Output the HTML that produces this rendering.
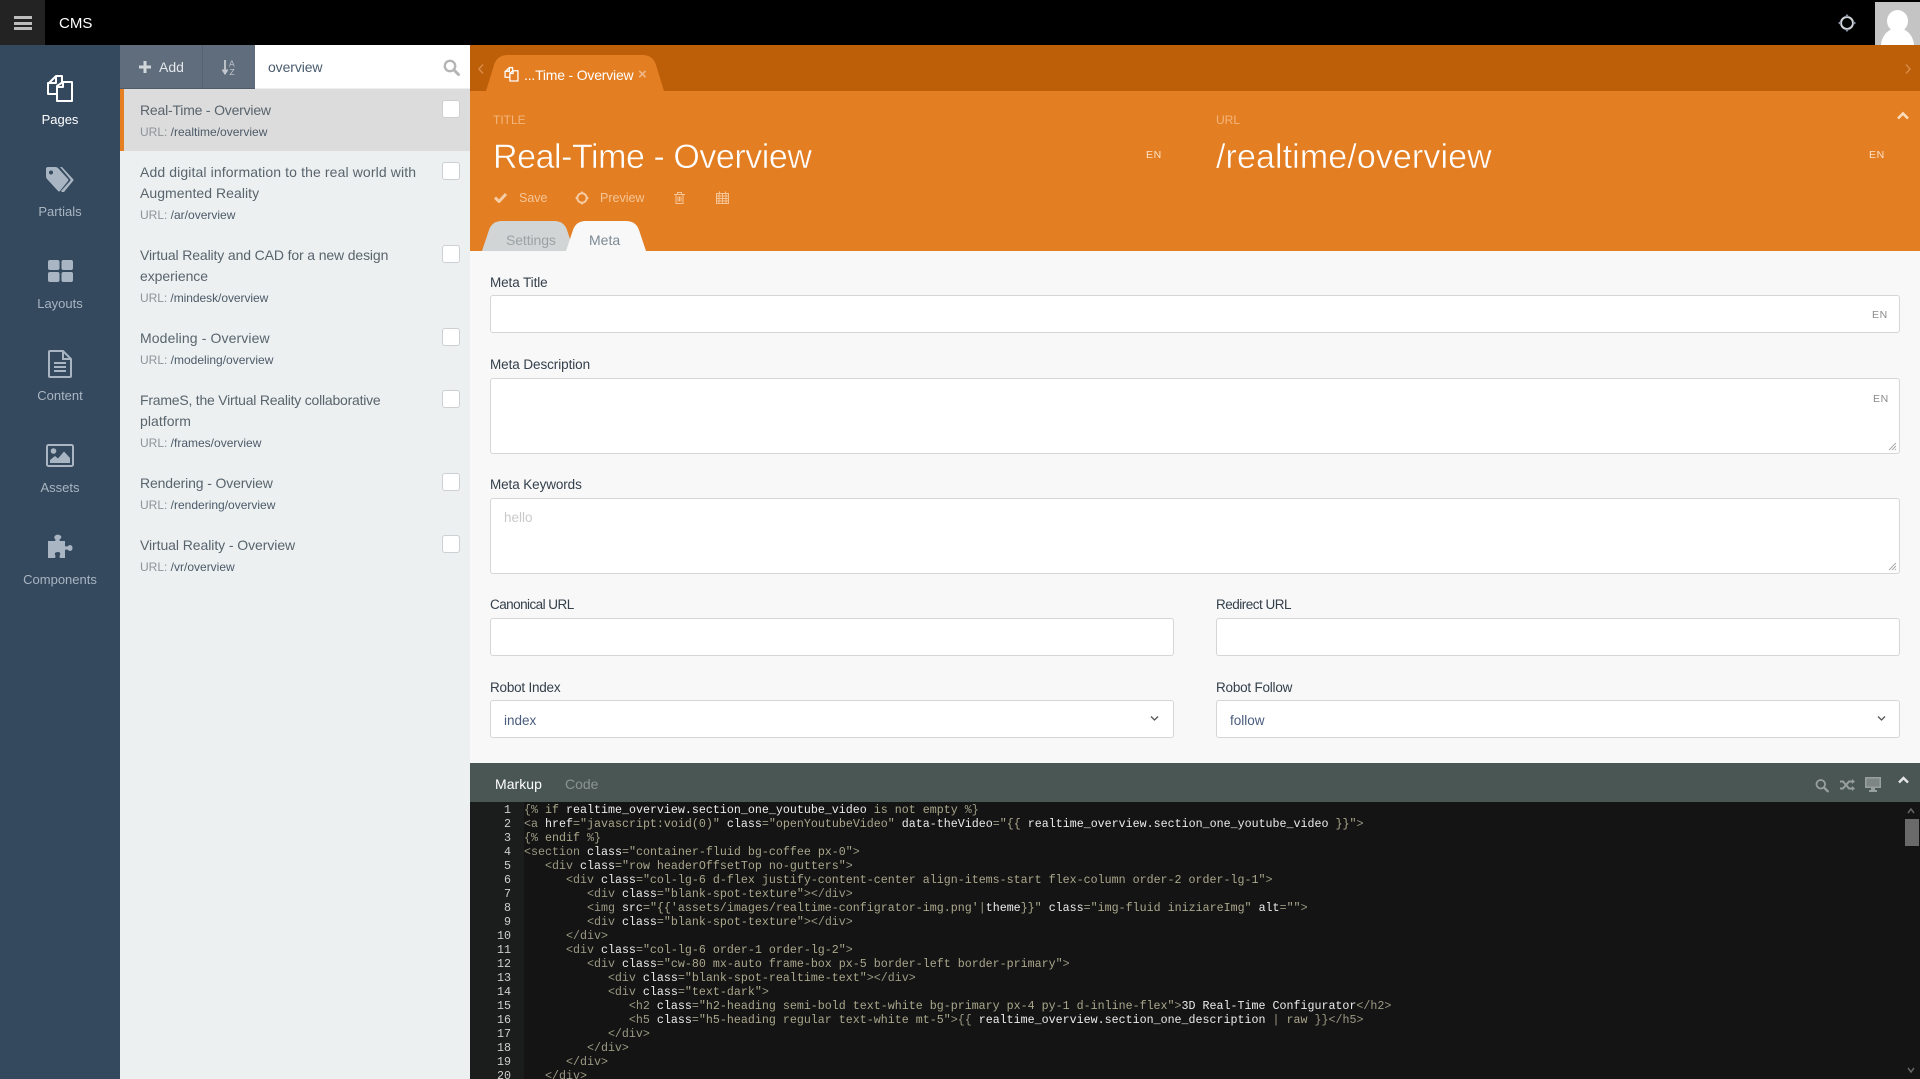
<!DOCTYPE html>
<html lang="en"><head><meta charset="utf-8"><title>CMS</title>
<style>
*{box-sizing:border-box}
html,body{margin:0;padding:0;width:1920px;height:1079px;overflow:hidden;background:#f8f8f8;font-family:"Liberation Sans",sans-serif}
.a{position:absolute}
.t{position:absolute;white-space:nowrap;line-height:20px;font-size:13.5px}
.nav{position:absolute;left:0;width:120px;text-align:center;line-height:20px;font-size:13px;color:#a9b5c2}
.tt{color:#59646d;font-size:14px;left:140px}
.u{color:#4c5a68;font-size:12px;left:140px}
.u i{font-style:normal;color:#8c9499}
.cb{position:absolute;left:442px;width:18px;height:18px;background:#fff;border:1px solid #ccd0d3;border-radius:3px}
.lb{color:#34404c;font-size:13.5px}
.in{position:absolute;background:#fff;border:1px solid #d4d6d8;border-radius:3px}
.en{position:absolute;font-size:10.5px;letter-spacing:.6px;line-height:14px;white-space:nowrap}
.big{color:#fff;font-size:34px;line-height:40px;-webkit-text-stroke:.5px #e37e23}
pre{position:absolute;margin:0;font-family:"Liberation Mono",monospace;font-size:11.66px;line-height:14px;white-space:pre}
.g{color:#9c9a84}.s{color:#aaa78c}.w{color:#ececec}
</style></head><body>

<!-- top bar -->
<div class="a" style="left:0;top:0;width:1920px;height:45px;background:#000"></div>
<div class="a" style="left:0;top:0;width:45px;height:45px;background:#232323"></div>
<div class="a" style="left:14px;top:16px;width:18px;height:3px;background:#bdbdbd"></div>
<div class="a" style="left:14px;top:22px;width:18px;height:3px;background:#bdbdbd"></div>
<div class="a" style="left:14px;top:27px;width:18px;height:3px;background:#bdbdbd"></div>
<div class="t" style="left:59px;top:14px;color:#fff;font-size:15px">CMS</div>
<svg class="a" style="left:1838px;top:14px" width="18" height="18" viewBox="0 0 18 18"><circle cx="9" cy="9" r="6" fill="none" stroke="#cfd3d8" stroke-width="2"/><path d="M9 0l2.400 3H6.600zM9 18l-2.400-3h4.800zM0 9l3-2.400v4.800zM18 9l-3 2.400V6.600z" fill="#8f99a8"/></svg>
<div class="a" style="left:1875px;top:2px;width:45px;height:43px;background:#c4c4c4;overflow:hidden">
<div class="a" style="left:12px;top:8px;width:21px;height:22px;border-radius:50%;background:#fff"></div>
<div class="a" style="left:6px;top:26px;width:33px;height:40px;border-radius:50%/45%;background:#fff"></div></div>

<!-- sidebar -->
<div class="a" style="left:0;top:45px;width:120px;height:1034px;background:#34495e"></div>
<svg class="a" style="left:46px;top:74px" width="28" height="28" viewBox="0 0 28 28" fill="none" stroke="#fff" stroke-width="2" stroke-linejoin="round"><path d="M10 2H16V8M2 10L10 2V9H2V20H11"/><path d="M11 12L17 8H26V27H11ZM17 8V13H11" /></svg>
<div class="nav" style="top:110px;color:#fff">Pages</div>
<svg class="a" style="left:46px;top:167px" width="29" height="26" viewBox="0 0 29 26" fill="#a9b5c2"><path fill-rule="evenodd" d="M0 2Q0 0 2 0H9Q11 0 12 1L22 12Q23 13 22 14L14 24Q13 25 12 24L1 12Q0 11 0 9ZM5 3.500A2 2 0 1 0 5 7.500A2 2 0 1 0 5 3.500Z"/><path d="M14 0H16L27 12Q28 13 27 14L18 25H16L15 24L24 14Q25 13 24 12Z"/></svg>
<div class="nav" style="top:202px">Partials</div>
<svg class="a" style="left:48px;top:260px" width="25" height="22" viewBox="0 0 25 22" fill="#a9b5c2"><rect width="11.500" height="10" rx="2"/><rect x="13.500" width="11.500" height="10" rx="2"/><rect y="12" width="11.500" height="10" rx="2"/><rect x="13.500" y="12" width="11.500" height="10" rx="2"/></svg>
<div class="nav" style="top:294px">Layouts</div>
<svg class="a" style="left:48px;top:350px" width="24" height="28" viewBox="0 0 24 28" fill="none" stroke="#a9b5c2" stroke-width="2"><path d="M15 1H2Q1 1 1 2V26Q1 27 2 27H22Q23 27 23 26V9ZM15 1V9H23"/><path d="M6 13H18M6 17H18M6 21H18"/></svg>
<div class="nav" style="top:386px">Content</div>
<svg class="a" style="left:46px;top:444px" width="28" height="24" viewBox="0 0 28 24"><rect x="1" y="1" width="26" height="21" rx="1.500" fill="none" stroke="#a9b5c2" stroke-width="2"/><circle cx="7.500" cy="7" r="2.800" fill="#a9b5c2"/><path d="M4 19V16L9 12L12 14.500L18 7.500L24 14V19Z" fill="#a9b5c2"/></svg>
<div class="nav" style="top:478px">Assets</div>
<svg class="a" style="left:47px;top:534px" width="26" height="25" viewBox="0 0 26 25" fill="#a9b5c2"><path d="M1 7H8Q9 6 8 5Q6 3 9 1Q12 0 14 2Q15 4 13 5Q12 6 13 7H18V12Q20 13 21 12Q23 10 25 12Q26 14 25 16Q23 18 21 16Q19 15 18 16V24H13Q12 22 13 21Q14 18 11 18Q7 18 8 21Q9 22 8 24H1Z"/></svg>
<div class="nav" style="top:570px">Components</div>

<!-- list -->
<div class="a" style="left:120px;top:45px;width:350px;height:1034px;background:#ecf0f1"></div>
<div class="a" style="left:120px;top:45px;width:135px;height:44px;background:#606d7c;border-bottom:1px solid #4f5b68"></div>
<div class="a" style="left:202px;top:45px;width:1px;height:43px;background:#566270"></div>
<svg class="a" style="left:139px;top:61px" width="12" height="12" viewBox="0 0 12 12"><path d="M4.500 0h3v4.500H12v3H7.500V12h-3V7.500H0v-3h4.500z" fill="#d3d7dc"/></svg>
<div class="t" style="left:159px;top:57px;color:#e4e7ea;font-size:14px">Add</div>
<svg class="a" style="left:222px;top:59px" width="16" height="16" viewBox="0 0 16 16"><path d="M3 1v12M0.500 10.500L3 14.500L5.500 10.500" stroke="#c3c9cf" stroke-width="1.800" fill="none"/><text x="7" y="7.500" font-size="8.500" fill="#c3c9cf" font-family="Liberation Sans">A</text><text x="7.500" y="16" font-size="8.500" fill="#c3c9cf" font-family="Liberation Sans">Z</text></svg>
<div class="a" style="left:255px;top:45px;width:215px;height:43px;background:#fff"></div>
<div class="t" style="left:268px;top:57px;color:#4a5c6e;font-size:14px;letter-spacing:-.1px">overview</div>
<svg class="a" style="left:443px;top:59px" width="17" height="17" viewBox="0 0 17 17" fill="none" stroke="#b5b5b5"><circle cx="7" cy="7" r="5.200" stroke-width="2.400"/><path d="M11 11L15.500 15.500" stroke-width="3" stroke-linecap="round"/></svg>

<div class="a" style="left:120px;top:89px;width:350px;height:62px;background:#dcdcdc"></div>
<div class="a" style="left:120px;top:89px;width:4px;height:62px;background:#e67e22"></div>

<div class="t tt" style="top:100px;letter-spacing:-.2px">Real-Time - Overview</div>
<div class="t u" style="top:122px"><i>URL:</i> /realtime/overview</div>
<div class="cb" style="top:100px"></div>

<div class="t tt" style="top:162px;letter-spacing:.115px">Add digital information to the real world with</div>
<div class="t tt" style="top:183px;letter-spacing:.05px">Augmented Reality</div>
<div class="t u" style="top:205px"><i>URL:</i> /ar/overview</div>
<div class="cb" style="top:162px"></div>

<div class="t tt" style="top:245px;letter-spacing:-.13px">Virtual Reality and CAD for a new design</div>
<div class="t tt" style="top:266px;letter-spacing:-.05px">experience</div>
<div class="t u" style="top:288px;letter-spacing:-.05px"><i>URL:</i> /mindesk/overview</div>
<div class="cb" style="top:245px"></div>

<div class="t tt" style="top:328px;letter-spacing:.11px">Modeling - Overview</div>
<div class="t u" style="top:350px"><i>URL:</i> /modeling/overview</div>
<div class="cb" style="top:328px"></div>

<div class="t tt" style="top:390px;letter-spacing:-.22px">FrameS, the Virtual Reality collaborative</div>
<div class="t tt" style="top:411px;letter-spacing:.05px">platform</div>
<div class="t u" style="top:433px"><i>URL:</i> /frames/overview</div>
<div class="cb" style="top:390px"></div>

<div class="t tt" style="top:473px;letter-spacing:-.13px">Rendering - Overview</div>
<div class="t u" style="top:495px"><i>URL:</i> /rendering/overview</div>
<div class="cb" style="top:473px"></div>

<div class="t tt" style="top:535px;letter-spacing:-.07px">Virtual Reality - Overview</div>
<div class="t u" style="top:557px"><i>URL:</i> /vr/overview</div>
<div class="cb" style="top:535px"></div>

<!-- tab bar + header -->
<div class="a" style="left:470px;top:45px;width:1450px;height:46px;background:#bd5e08"></div>
<div class="a" style="left:470px;top:91px;width:1450px;height:160px;background:#e37e23"></div>
<svg class="a" style="left:476px;top:63px" width="10" height="12" viewBox="0 0 10 12"><path d="M7 1.500L3 6L7 10.500" fill="none" stroke="#d98a45" stroke-width="1.500"/></svg>
<svg class="a" style="left:1903px;top:63px" width="10" height="12" viewBox="0 0 10 12"><path d="M3 1.500L7 6L3 10.500" fill="none" stroke="#d98a45" stroke-width="1.500"/></svg>
<svg class="a" style="left:486px;top:55px" width="178" height="36" viewBox="0 0 178 36"><path d="M0 36L8 10Q11 0 22 0H156Q167 0 170 10L178 36Z" fill="#e37e23"/></svg>
<svg class="a" style="left:504px;top:66px" width="15" height="16" viewBox="0 0 28 28" fill="none" stroke="#fff" stroke-width="2.400" stroke-linejoin="round"><path d="M10 2H16V8M2 10L10 2V9H2V20H11"/><path d="M11 12L17 8H26V27H11ZM17 8V13H11"/></svg>
<div class="t" style="left:524px;top:65px;color:#fff;font-size:14px;letter-spacing:-.2px">...Time - Overview</div>
<div class="t" style="left:638px;top:65px;color:#f0b788;font-size:15px;font-weight:bold">×</div>

<div class="t" style="left:493px;top:110px;color:#f4b67c;font-size:12px">TITLE</div>
<div class="t big" style="left:493px;top:137px;letter-spacing:-.45px">Real-Time - Overview</div>
<div class="en" style="left:1146px;top:148px;color:#fce3c9">EN</div>
<div class="t" style="left:1216px;top:110px;color:#f4b67c;font-size:12px">URL</div>
<div class="t big" style="left:1216px;top:137px;letter-spacing:.1px">/realtime/overview</div>
<div class="en" style="left:1869px;top:148px;color:#fce3c9">EN</div>
<svg class="a" style="left:1897px;top:111px" width="12" height="9" viewBox="0 0 12 9"><path d="M1 7.500L6 2.500L11 7.500" fill="none" stroke="#fbdcbd" stroke-width="2.600"/></svg>

<svg class="a" style="left:494px;top:192px" width="13" height="11" viewBox="0 0 13 11"><path d="M1 5.500L5 9.500L12 2" fill="none" stroke="#f6cda6" stroke-width="3"/></svg>
<div class="t" style="left:519px;top:188px;color:#f6c596;font-size:12.5px">Save</div>
<svg class="a" style="left:575px;top:191px" width="14" height="14" viewBox="0 0 18 18"><circle cx="9" cy="9" r="6" fill="none" stroke="#f6cda6" stroke-width="2.400"/><path d="M9 0l2.400 3H6.600zM9 18l-2.400-3h4.800zM0 9l3-2.400v4.800zM18 9l-3 2.400V6.600z" fill="#f6cda6"/></svg>
<div class="t" style="left:600px;top:188px;color:#f6c596;font-size:12.5px">Preview</div>
<svg class="a" style="left:674px;top:192px" width="11" height="12" viewBox="0 0 11 12" fill="none" stroke="#f6c596"><path d="M0 2.500H11M2 2.500V11.500H9V2.500M3.500 2.500V.5H7.500V2.500M4 4.500V9.500M5.500 4.500V9.500M7 4.500V9.500"/></svg>
<svg class="a" style="left:716px;top:191px" width="13" height="13" viewBox="0 0 13 13" fill="none" stroke="#f6c596"><path d="M.5 2.500H12.500V12.500H.5ZM.5 5H12.500M.5 7.500H12.500M.5 10H12.500M3 2.500V12.500M6.500 2.500V12.500M10 2.500V12.500M3.500 .5V2.500M9.500 .5V2.500"/></svg>

<svg class="a" style="left:482px;top:221px" width="92" height="30" viewBox="0 0 92 30"><path d="M0 30L7 9Q10 0 20 0H72Q82 0 85 9L92 30Z" fill="#d2d5d5"/></svg>
<div class="t" style="left:506px;top:230px;color:#9ba2a4;font-size:14px;letter-spacing:-.1px">Settings</div>
<svg class="a" style="left:566px;top:221px" width="80" height="30" viewBox="0 0 80 30"><path d="M0 30L7 9Q10 0 20 0H60Q70 0 73 9L80 30Z" fill="#f8f8f8"/></svg>
<div class="t" style="left:589px;top:230px;color:#7c8a94;font-size:14px">Meta</div>

<!-- form -->
<div class="t lb" style="left:490px;top:273px;letter-spacing:-.1px">Meta Title</div>
<div class="in" style="left:490px;top:295px;width:1410px;height:38px"></div>
<div class="en" style="left:1872px;top:308px;color:#8a8a8a">EN</div>

<div class="t lb" style="left:490px;top:355px;letter-spacing:-.08px">Meta Description</div>
<div class="in" style="left:490px;top:378px;width:1410px;height:76px"></div>
<div class="en" style="left:1873px;top:392px;color:#8a8a8a">EN</div>
<svg class="a" style="left:1888px;top:442px" width="9" height="9" viewBox="0 0 9 9"><path d="M8 1L1 8M8 4L4 8M8 7L7 8" stroke="#aaa" fill="none"/></svg>

<div class="t lb" style="left:490px;top:475px;letter-spacing:-.1px">Meta Keywords</div>
<div class="in" style="left:490px;top:498px;width:1410px;height:76px"></div>
<div class="t" style="left:504px;top:508px;color:#c9c9c9;font-size:13.5px">hello</div>
<svg class="a" style="left:1888px;top:562px" width="9" height="9" viewBox="0 0 9 9"><path d="M8 1L1 8M8 4L4 8M8 7L7 8" stroke="#aaa" fill="none"/></svg>

<div class="t lb" style="left:490px;top:595px;letter-spacing:-.55px">Canonical URL</div>
<div class="in" style="left:490px;top:618px;width:684px;height:38px"></div>
<div class="t lb" style="left:1216px;top:595px;letter-spacing:-.5px">Redirect URL</div>
<div class="in" style="left:1216px;top:618px;width:684px;height:38px"></div>

<div class="t lb" style="left:490px;top:678px;letter-spacing:-.22px">Robot Index</div>
<div class="in" style="left:490px;top:700px;width:684px;height:38px"></div>
<div class="t" style="left:504px;top:711px;color:#4a5c7e;font-size:13.5px">index</div>
<svg class="a" style="left:1150px;top:715px" width="9" height="7" viewBox="0 0 9 7"><path d="M1 1.500L4.500 5L8 1.500" fill="none" stroke="#555" stroke-width="1.300"/></svg>
<div class="t lb" style="left:1216px;top:678px;letter-spacing:-.22px">Robot Follow</div>
<div class="in" style="left:1216px;top:700px;width:684px;height:38px"></div>
<div class="t" style="left:1230px;top:711px;color:#4a5c7e;font-size:13.5px">follow</div>
<svg class="a" style="left:1877px;top:715px" width="9" height="7" viewBox="0 0 9 7"><path d="M1 1.500L4.500 5L8 1.500" fill="none" stroke="#555" stroke-width="1.300"/></svg>

<!-- code -->
<div class="a" style="left:470px;top:763px;width:1450px;height:39px;background:#4a5654"></div>
<div class="t" style="left:495px;top:774px;color:#fff;font-size:14px;letter-spacing:.05px">Markup</div>
<div class="t" style="left:565px;top:774px;color:#8b9492;font-size:14px">Code</div>
<svg class="a" style="left:1815px;top:778px" width="14" height="15" viewBox="0 0 17 17" fill="none" stroke="#98a09f"><circle cx="7" cy="7" r="5.200" stroke-width="2.200"/><path d="M11 11L15.500 15.500" stroke-width="2.800" stroke-linecap="round"/></svg>
<svg class="a" style="left:1840px;top:778px" width="15" height="14" viewBox="0 0 15 14" fill="none" stroke="#98a09f" stroke-width="2"><path d="M0 3.500H3L9 10.500H13M0 10.500H3L9 3.500H13"/><path d="M12 1L15 3.500L12 6ZM12 8L15 10.500L12 13Z" fill="#98a09f" stroke="none"/></svg>
<svg class="a" style="left:1865px;top:777px" width="16" height="15" viewBox="0 0 16 15"><path d="M0 0H16V11H10V13H12V15H4V13H6V11H0ZM1.500 1.500V9.500H14.500V1.500Z" fill="#98a09f" fill-rule="evenodd"/><rect x="1.500" y="1.500" width="13" height="8" fill="#7d8685"/></svg>
<svg class="a" style="left:1898px;top:776px" width="11" height="8" viewBox="0 0 11 8"><path d="M1 6.500L5.500 2L10 6.500" fill="none" stroke="#e4e6e6" stroke-width="2.400"/></svg>

<div class="a" style="left:470px;top:802px;width:1450px;height:277px;background:#141414;overflow:hidden">
<div class="a" style="left:0;top:0;width:54px;height:277px;background:#1b1c1c"></div>
<pre style="left:0;top:1px;width:41px;text-align:right;color:#cfcfcf">1
2
3
4
5
6
7
8
9
10
11
12
13
14
15
16
17
18
19
20</pre>
<pre style="left:54px;top:1px" class="g"><span class="g">{%</span> <span class="s">if</span> <span class="w">realtime_overview.section_one_youtube_video</span> <span class="s">is not empty</span> <span class="g">%}</span>
&lt;a <span class="w">href</span>=<span class="s">"javascript:void(0)"</span> <span class="w">class</span>=<span class="s">"openYoutubeVideo"</span> <span class="w">data-theVideo</span>=<span class="s">"{{</span> <span class="w">realtime_overview.section_one_youtube_video</span> <span class="s">}}"</span>&gt;
{% <span class="s">endif</span> %}
&lt;section <span class="w">class</span>=<span class="s">"container-fluid bg-coffee px-0"</span>&gt;
   &lt;div <span class="w">class</span>=<span class="s">"row headerOffsetTop no-gutters"</span>&gt;
      &lt;div <span class="w">class</span>=<span class="s">"col-lg-6 d-flex justify-content-center align-items-start flex-column order-2 order-lg-1"</span>&gt;
         &lt;div <span class="w">class</span>=<span class="s">"blank-spot-texture"</span>&gt;&lt;/div&gt;
         &lt;img <span class="w">src</span>=<span class="s">"{{'assets/images/realtime-configrator-img.png'</span><span class="g">|</span><span class="w">theme</span><span class="s">}}"</span> <span class="w">class</span>=<span class="s">"img-fluid iniziareImg"</span> <span class="w">alt</span>=<span class="s">""</span>&gt;
         &lt;div <span class="w">class</span>=<span class="s">"blank-spot-texture"</span>&gt;&lt;/div&gt;
      &lt;/div&gt;
      &lt;div <span class="w">class</span>=<span class="s">"col-lg-6 order-1 order-lg-2"</span>&gt;
         &lt;div <span class="w">class</span>=<span class="s">"cw-80 mx-auto frame-box px-5 border-left border-primary"</span>&gt;
            &lt;div <span class="w">class</span>=<span class="s">"blank-spot-realtime-text"</span>&gt;&lt;/div&gt;
            &lt;div <span class="w">class</span>=<span class="s">"text-dark"</span>&gt;
               &lt;h2 <span class="w">class</span>=<span class="s">"h2-heading semi-bold text-white bg-primary px-4 py-1 d-inline-flex"</span>&gt;<span class="w">3D Real-Time Configurator</span>&lt;/h2&gt;
               &lt;h5 <span class="w">class</span>=<span class="s">"h5-heading regular text-white mt-5"</span>&gt;{{ <span class="w">realtime_overview.section_one_description</span> | <span class="s">raw</span> }}&lt;/h5&gt;
            &lt;/div&gt;
         &lt;/div&gt;
      &lt;/div&gt;
   &lt;/div&gt;</pre>
<svg class="a" style="left:1436px;top:5px" width="10" height="8" viewBox="0 0 10 8"><path d="M2 6L5 2L8 6" fill="none" stroke="#666" stroke-width="1.500"/></svg>
<div class="a" style="left:1435px;top:17px;width:14px;height:27px;background:#6a6a6a"></div>
<svg class="a" style="left:1436px;top:264px" width="10" height="8" viewBox="0 0 10 8"><path d="M2 2L5 6L8 2" fill="none" stroke="#666" stroke-width="1.500"/></svg>
</div>
</body></html>
